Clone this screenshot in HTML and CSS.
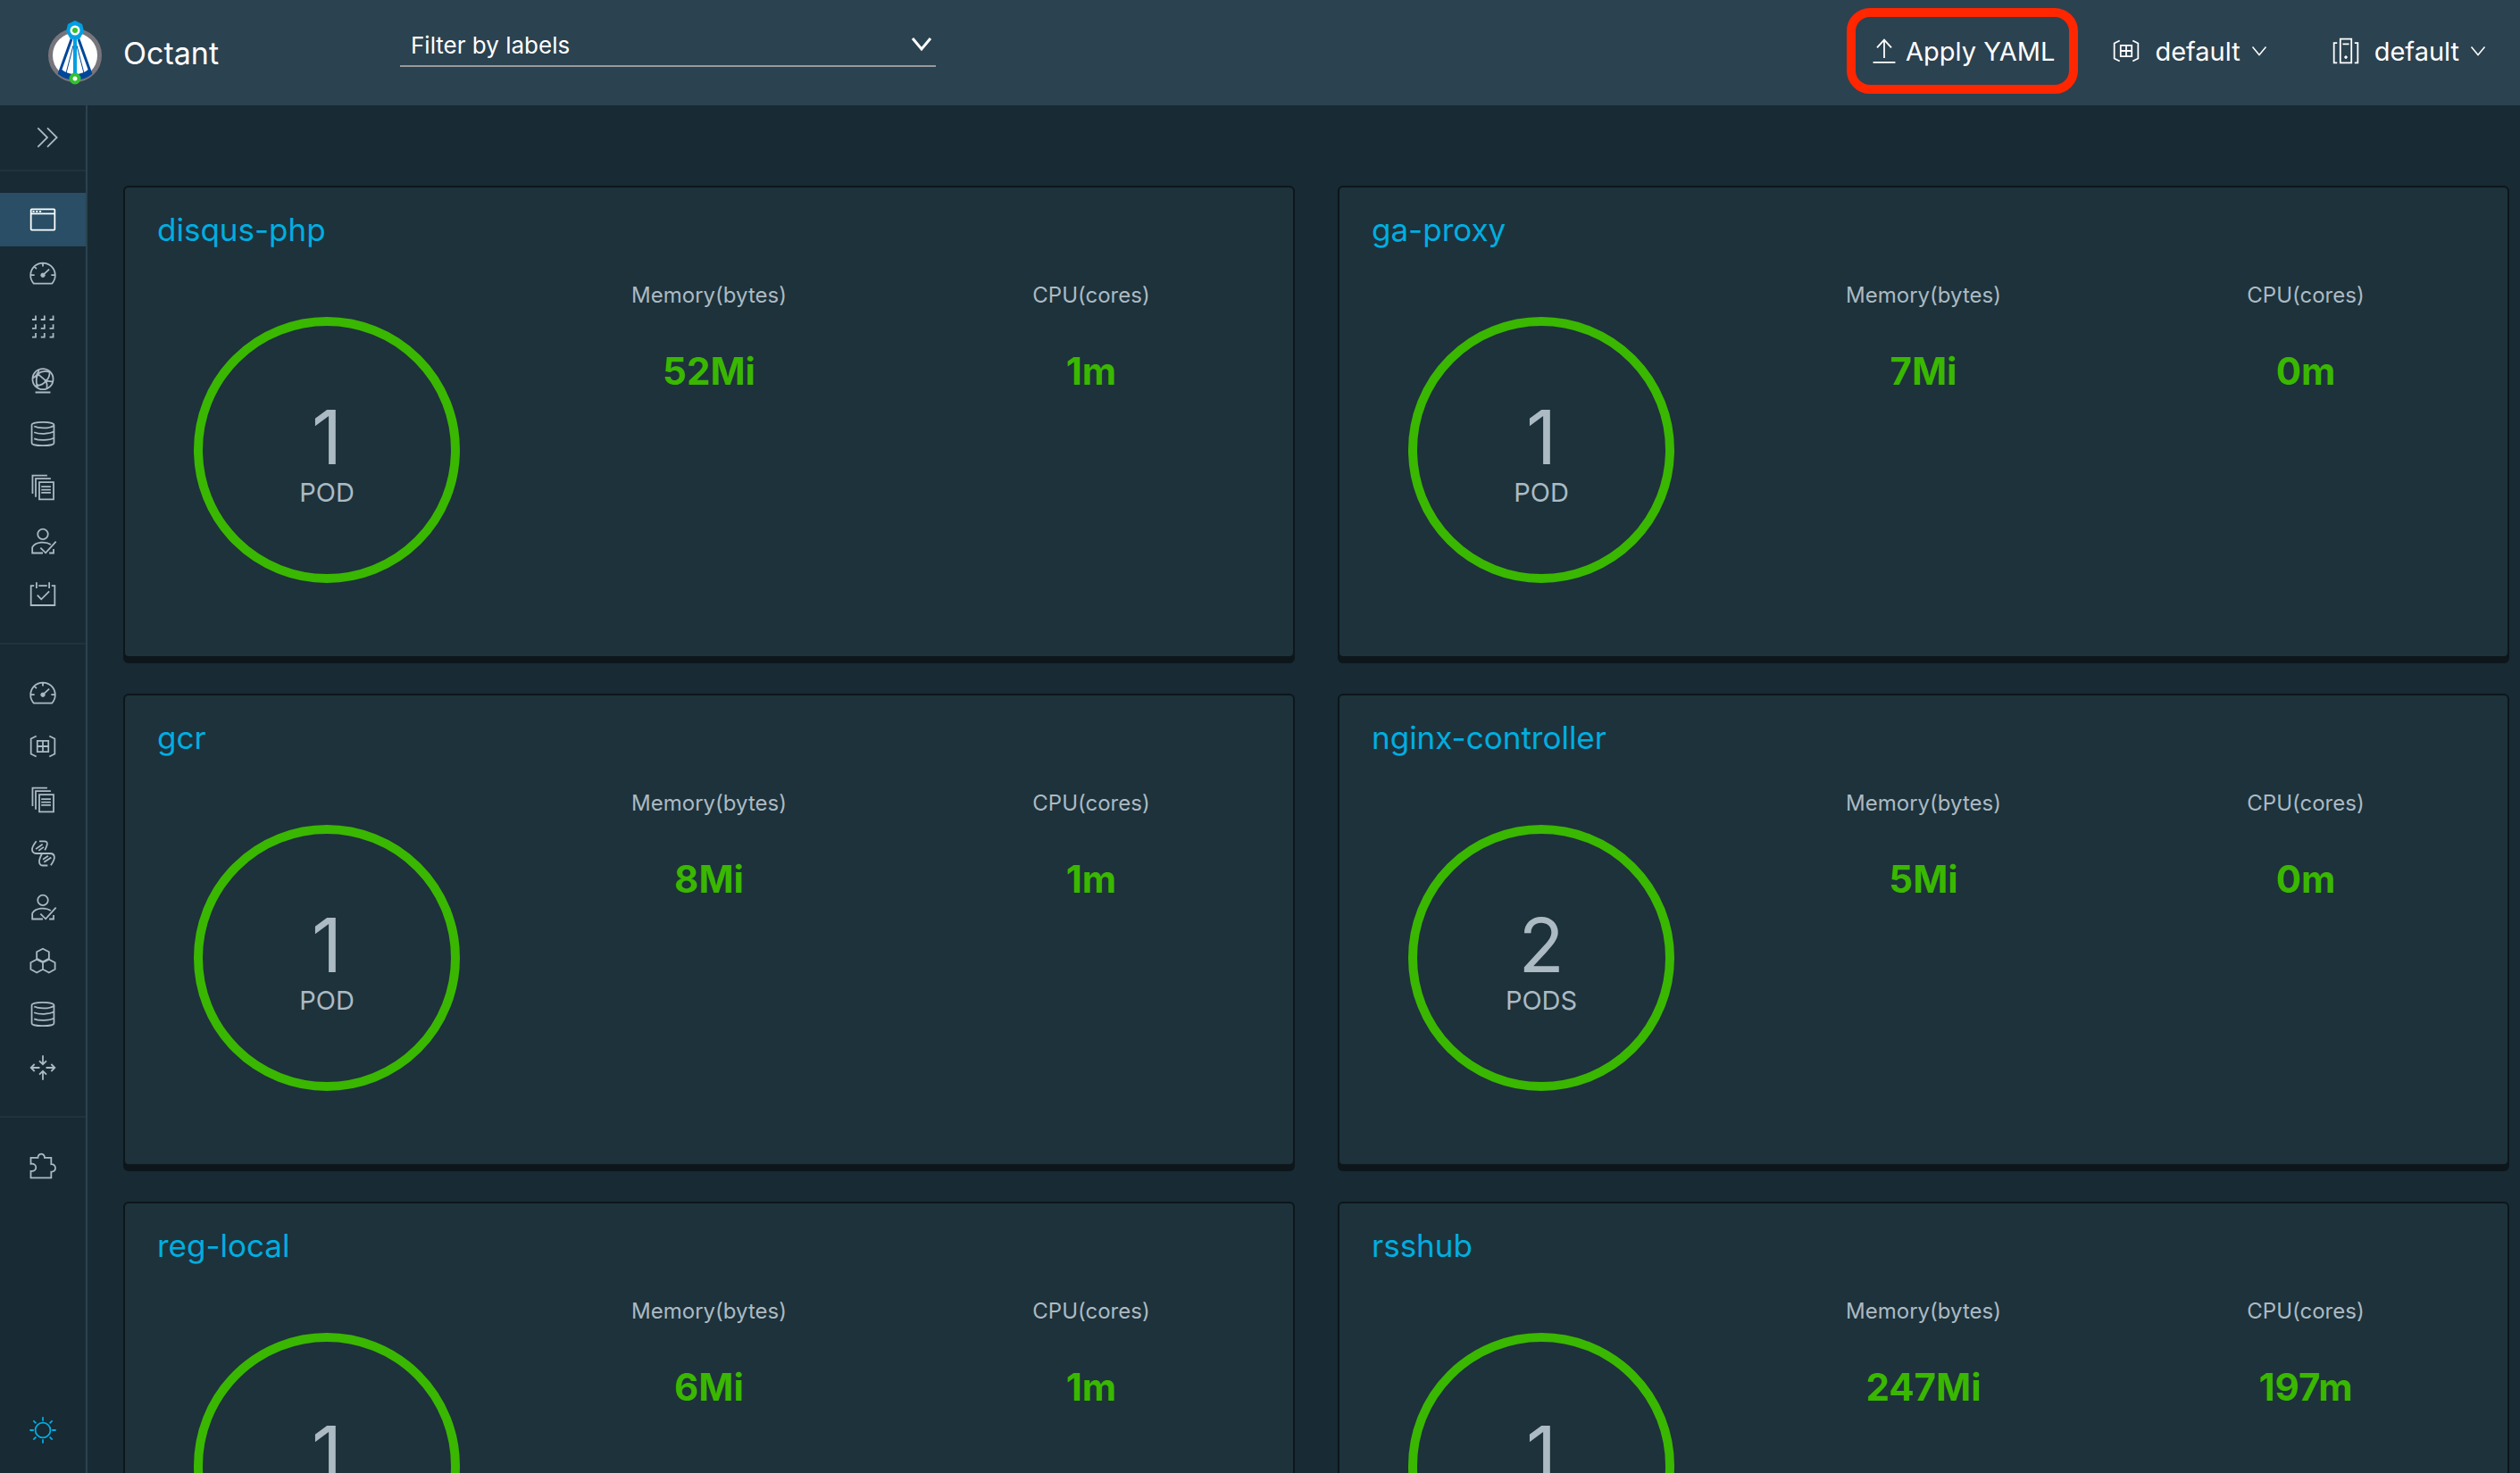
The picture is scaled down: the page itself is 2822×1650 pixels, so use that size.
FILE: index.html
```html
<!DOCTYPE html>
<html lang="en">
<head>
<meta charset="utf-8">
<title>Octant</title>
<meta name="viewport" content="width=device-width, initial-scale=1">
<link rel="stylesheet" href="styles.css">
</head>
<body>
<svg class="sprite" aria-hidden="true">
  <symbol id="i-window" viewBox="0 0 36 36"><rect x="3" y="5" width="30" height="26" rx="1"/><path d="M3 10.500h30M5 7.800h2.500M9.200 7.800h2.500M13.400 7.800h2.500"/></symbol>
  <symbol id="i-gauge" viewBox="0 0 36 36"><path d="M6.500 31A15.500 15.500 0 1 1 29.500 31ZM18 5v4.500M2.500 20.500h5M28.500 20.500h5M7 9.500l3 3M18 20.500l8-7.500"/><circle class="fill" cx="18" cy="20.500" r="2.500"/></symbol>
  <symbol id="i-grid" viewBox="0 0 36 36"><path d="M4.500 9h4.500V4M15.500 9h4.500V4M26.500 9h4.500V4M4.500 20h4.500v-5M15.500 20h4.500v-5M26.500 20h4.500v-5M4.500 31h4.500v-5M15.500 31h4.500v-5M26.500 31h4.500v-5"/></symbol>
  <symbol id="i-globe" viewBox="0 0 36 36"><circle cx="18" cy="16.500" r="13"/><path d="M8.500 33.200h19M11.600 10L22 18.700M11.600 10C16 6.500 22 6 27 8M22 18.700Q27 14 26.500 7M22 18.700l9 1M22 18.700Q18 24 11 24.700M12 10Q8 17 11 25M5.500 15Q8 14 11.600 10M22 18.700Q24 24 23 28M11.600 10L13 5"/><circle class="fill" cx="11.600" cy="10" r="1.500"/><circle class="fill" cx="22" cy="18.700" r="1.500"/><circle class="fill" cx="11" cy="24.700" r="1.500"/></symbol>
  <symbol id="i-storage" viewBox="0 0 36 36"><path d="M4 6.500C4 2 32 2 32 6.500V29.500C32 34 4 34 4 29.500ZM7 8.500C13 11.500 26 11.500 32 7.500M7 16C13 18.500 26 18.500 32 15M7 24C13 26.500 26 26.500 32 23"/></symbol>
  <symbol id="i-pages" viewBox="0 0 36 36"><path d="M13.500 11.500h18V33h-18zM16 17h12M16 21h12M16 24.700h12M9 30V7h19M5 26V3h18.500"/></symbol>
  <symbol id="i-user" viewBox="0 0 36 36"><circle cx="18" cy="9.400" r="6.500"/><path d="M28 22.500C22 18.500 9 18.500 4.700 26V33.200H18M26 33.200h5.500V28M15 26.600L21.500 33 34.500 18.700"/></symbol>
  <symbol id="i-calendar" viewBox="0 0 36 36"><path d="M7 7H3V31.500H33V7H29M12.700 7h10.600M10 2.500V10M26 2.500V10M11 18.700l5 5.300L26 14"/></symbol>
  <symbol id="i-namespace" viewBox="0 0 36 36"><path d="M9.800 5L3 8.500V27.500L9.800 31M26.200 5L33 8.500V27.500L26.200 31M11 11h14v14H11zM18 11v14M11 18h14"/></symbol>
  <symbol id="i-helix" viewBox="0 0 36 36"><path d="M9.800 2.500C7 6 4.500 10 4.500 13C4.500 16 6 17.500 9 18H27C30.500 18 32.500 20 32.500 23C32.500 26 30 30 28 33M13.500 2.700H20C25 2.700 24 7 20.500 14M17 18C14 24 13 27 13.500 29C14 32 16 33.200 18 33.200H24M9 12.500L17.600 6.500M12.700 14.500L19 10M18 25.500L24.700 21M19.500 29L28.500 23"/></symbol>
  <symbol id="i-hexes" viewBox="0 0 36 36"><path d="M18 3l7.700 4v8.500L18 19.500l-7.700-4V7zM10.300 16.500L18 20.500V29L10.300 33.200 2.700 29V20.500zM25.700 16.500L33.300 20.500V29L25.700 33.200 18 29V20.500z"/></symbol>
  <symbol id="i-arrows" viewBox="0 0 36 36"><path d="M18 2.600V13.500M13.500 9.500L18 13.800 22.500 9.500M18 33.400V22.500M13.500 26.500L18 22.200 22.500 26.500M14 18H3M7.500 13.500L3 18 7.500 22.500M22 18H33M28.500 13.500L33 18 28.500 22.500"/></symbol>
  <symbol id="i-plugin" viewBox="0 0 36 36"><path d="M2.800 7.700H11.800C11.500 1.500 20.500 1.500 20.200 7.700H28.500V16C35.500 15.500 35.500 26 28.500 25.500V33H2.800V24.500C11.500 26 11.500 14 2.800 15.500Z"/></symbol>
  <symbol id="i-sun" viewBox="0 0 36 36"><circle cx="18" cy="18" r="9.500"/><path d="M18 1.500v5M18 29.500v5M1.500 18h5M29.500 18h5M6 6l3.500 3.500M26.500 26.500L30 30M30 6l-3.500 3.500M9.500 26.500L6 30"/></symbol>
  <symbol id="i-cluster" viewBox="0 0 36 36"><path d="M11 3H25V33H11zM14 9.500h8M7 8H3V33H7M29 8h4V33H29"/><circle class="fill" cx="18" cy="26" r="1.500"/></symbol>
  <symbol id="i-upload" viewBox="0 0 36 36"><path d="M18 27V4M9 14L18 4 27 14M4 32.500H32"/></symbol>
  <symbol id="i-expand" viewBox="0 0 36 36"><path d="M6 6L18 18 6 30M18 6L30 18 18 30"/></symbol>
  <symbol id="i-caret" viewBox="0 0 24 24"><path d="M2 6L12 18 22 6"/></symbol>
</svg>

<header class="header">
  <a class="brand" href="#">
    <svg class="logo" viewBox="0 0 64 72" aria-hidden="true">
      <circle cx="32" cy="39" r="27.500" fill="#fff" stroke="#76757b" stroke-width="5"/>
      <path d="M13 60A30 30 0 0 0 51 60L48 54A24 24 0 0 1 16 54Z" fill="#00479a"/>
      <path d="M28 21L14 60M36 21L50 60" stroke="#00479a" stroke-width="3"/>
      <path d="M30 28L22 59M34 28L42 59" stroke="#00479a" stroke-width="1"/>
      <path d="M32 20V60" stroke="#009fe3" stroke-width="4"/>
      <path d="M32 0l8 4 2 8-5 9H27l-5-9 2-8z" fill="#009fe3"/>
      <circle cx="32" cy="11" r="5.500" fill="#fff"/><circle cx="32" cy="11" r="3" fill="#34c030"/>
      <circle cx="32" cy="65" r="4.500" fill="#fff" stroke="#34c030" stroke-width="4"/>
    </svg>
    <span>Octant</span>
  </a>
  <div class="filter">
    <select aria-label="Filter by labels"><option>Filter by labels</option></select>
    <svg class="filter-caret" aria-hidden="true"><use href="#i-caret"/></svg>
  </div>
  <div class="tools">
    <button class="tool apply" type="button"><svg class="icon" aria-hidden="true"><use href="#i-upload"/></svg>Apply YAML</button>
    <button class="tool" type="button"><svg class="icon" aria-hidden="true"><use href="#i-namespace"/></svg>default<svg class="caret" aria-hidden="true"><use href="#i-caret"/></svg></button>
    <button class="tool" type="button"><svg class="icon" aria-hidden="true"><use href="#i-cluster"/></svg>default<svg class="caret" aria-hidden="true"><use href="#i-caret"/></svg></button>
  </div>
</header>

<div class="shell">
  <nav class="sidebar" aria-label="Main">
    <button class="expand" type="button" aria-label="Expand"><svg class="icon" aria-hidden="true"><use href="#i-expand"/></svg></button>
    <div class="group">
      <a class="item active" href="#" aria-label="Applications"><svg class="icon"><use href="#i-window"/></svg></a>
      <a class="item" href="#" aria-label="Overview"><svg class="icon"><use href="#i-gauge"/></svg></a>
      <a class="item" href="#" aria-label="Workloads"><svg class="icon"><use href="#i-grid"/></svg></a>
      <a class="item" href="#" aria-label="Discovery"><svg class="icon"><use href="#i-globe"/></svg></a>
      <a class="item" href="#" aria-label="Storage"><svg class="icon"><use href="#i-storage"/></svg></a>
      <a class="item" href="#" aria-label="Resources"><svg class="icon"><use href="#i-pages"/></svg></a>
      <a class="item" href="#" aria-label="Access"><svg class="icon"><use href="#i-user"/></svg></a>
      <a class="item" href="#" aria-label="Events"><svg class="icon"><use href="#i-calendar"/></svg></a>
    </div>
    <div class="group">
      <a class="item" href="#" aria-label="Cluster"><svg class="icon"><use href="#i-gauge"/></svg></a>
      <a class="item" href="#" aria-label="Namespaces"><svg class="icon"><use href="#i-namespace"/></svg></a>
      <a class="item" href="#" aria-label="Custom resources"><svg class="icon"><use href="#i-pages"/></svg></a>
      <a class="item" href="#" aria-label="Services"><svg class="icon"><use href="#i-helix"/></svg></a>
      <a class="item" href="#" aria-label="Cluster access"><svg class="icon"><use href="#i-user"/></svg></a>
      <a class="item" href="#" aria-label="Nodes"><svg class="icon"><use href="#i-hexes"/></svg></a>
      <a class="item" href="#" aria-label="Volumes"><svg class="icon"><use href="#i-storage"/></svg></a>
      <a class="item" href="#" aria-label="Port forwards"><svg class="icon"><use href="#i-arrows"/></svg></a>
    </div>
    <div class="group">
      <a class="item" href="#" aria-label="Plugins"><svg class="icon"><use href="#i-plugin"/></svg></a>
    </div>
    <button class="item theme" type="button" aria-label="Switch theme"><svg class="icon"><use href="#i-sun"/></svg></button>
  </nav>

  <main class="content">
    <article class="card">
      <h2><a href="#">disqus-php</a></h2>
      <div class="stats">
        <div class="ring"><span class="count">1</span><span class="unit">POD</span></div>
        <div class="metric"><h3>Memory(bytes)</h3><p>52Mi</p></div>
        <div class="metric"><h3>CPU(cores)</h3><p>1m</p></div>
      </div>
    </article>
    <article class="card">
      <h2><a href="#">ga-proxy</a></h2>
      <div class="stats">
        <div class="ring"><span class="count">1</span><span class="unit">POD</span></div>
        <div class="metric"><h3>Memory(bytes)</h3><p>7Mi</p></div>
        <div class="metric"><h3>CPU(cores)</h3><p>0m</p></div>
      </div>
    </article>
    <article class="card">
      <h2><a href="#">gcr</a></h2>
      <div class="stats">
        <div class="ring"><span class="count">1</span><span class="unit">POD</span></div>
        <div class="metric"><h3>Memory(bytes)</h3><p>8Mi</p></div>
        <div class="metric"><h3>CPU(cores)</h3><p>1m</p></div>
      </div>
    </article>
    <article class="card">
      <h2><a href="#">nginx-controller</a></h2>
      <div class="stats">
        <div class="ring"><span class="count">2</span><span class="unit">PODS</span></div>
        <div class="metric"><h3>Memory(bytes)</h3><p>5Mi</p></div>
        <div class="metric"><h3>CPU(cores)</h3><p>0m</p></div>
      </div>
    </article>
    <article class="card">
      <h2><a href="#">reg-local</a></h2>
      <div class="stats">
        <div class="ring"><span class="count">1</span><span class="unit">POD</span></div>
        <div class="metric"><h3>Memory(bytes)</h3><p>6Mi</p></div>
        <div class="metric"><h3>CPU(cores)</h3><p>1m</p></div>
      </div>
    </article>
    <article class="card">
      <h2><a href="#">rsshub</a></h2>
      <div class="stats">
        <div class="ring"><span class="count">1</span><span class="unit">POD</span></div>
        <div class="metric"><h3>Memory(bytes)</h3><p>247Mi</p></div>
        <div class="metric"><h3>CPU(cores)</h3><p>197m</p></div>
      </div>
    </article>
  </main>
</div>
</body>
</html>
```
FILE: styles.css
```css
* { box-sizing: border-box; }

body {
  margin: 0;
  height: 100vh;
  display: flex;
  flex-direction: column;
  overflow: hidden;
  background: #182a34;
  color: #acbac3;
  font-family: Inter, "Open Sans", sans-serif;
}

h2, h3, p { margin: 0; }
a { color: inherit; text-decoration: none; }

button {
  margin: 0;
  padding: 0;
  border: 0;
  background: none;
  color: inherit;
  font: inherit;
  cursor: pointer;
}

svg {
  fill: none;
  stroke: currentColor;
  stroke-width: 2;
}

.fill { fill: currentColor; stroke-width: 1; }
.sprite { display: none; }
.icon { width: 32px; height: 32px; flex: none; }

/* Header */
.header {
  flex: none;
  display: flex;
  align-items: center;
  height: 118px;
  padding: 0 38px 0 52px;
  background: #2b4250;
  color: #fff;
}

.brand {
  display: flex;
  align-items: center;
  gap: 22px;
  width: 396px;
  font-size: 34px;
}

.logo { width: 64px; height: 72px; stroke: none; }

.filter { position: relative; width: 600px; }

.filter select {
  width: 100%;
  height: 48px;
  margin-bottom: 16px;
  padding: 0 48px 0 12px;
  display: block;
  appearance: none;
  border: 0;
  border-bottom: 2px solid #999;
  border-radius: 0;
  background: transparent;
  color: #fff;
  font: inherit;
  font-size: 26px;
}

.filter-caret {
  position: absolute;
  right: 4px;
  top: 10px;
  width: 24px;
  height: 24px;
  stroke-width: 3;
}

.tools {
  display: flex;
  align-items: center;
  margin: 0 0 4px auto;
}

.tool {
  display: flex;
  align-items: center;
  gap: 16px;
  margin-left: 72px;
  font-size: 29px;
}

.apply {
  gap: 8px;
  height: 96px;
  margin: 0 -34px 0 0;
  padding: 0 16px;
  border: 10px solid #ff2600;
  border-radius: 26px;
}

.caret { width: 18px; height: 18px; margin-left: -4px; }

/* Sidebar */
.shell { flex: 1; display: flex; min-height: 0; }

.sidebar {
  flex: none;
  display: flex;
  flex-direction: column;
  width: 98px;
  padding-bottom: 18px;
  border-right: 2px solid #2b4250;
}

.expand {
  display: flex;
  align-items: center;
  justify-content: center;
  height: 72px;
  padding-left: 10px;
}

.group { padding: 24px 0; border-top: 2px solid #21333b; }

.item {
  display: flex;
  align-items: center;
  justify-content: center;
  height: 60px;
}

.item.active { background: #294e65; color: #fff; }
.theme { margin-top: auto; color: #00aee0; }

/* Cards */
.content {
  flex: 1;
  display: grid;
  grid-template-columns: 1fr 1fr;
  align-content: start;
  gap: 40px 48px;
  padding: 90px 12px 40px 40px;
  overflow: hidden;
}

.card {
  min-height: 529px;
  padding: 0 12px;
  border: 2px solid #0d161b;
  border-radius: 6px;
  background: #1d323b;
  box-shadow: 0 6px 0 #0d161b;
}

.card h2 {
  padding: 23px 24px 20px;
  color: #00aee0;
  font-size: 35px;
  font-weight: 400;
  line-height: 48px;
}

.stats {
  display: grid;
  grid-template-columns: repeat(3, 1fr);
  justify-items: center;
}

.ring {
  display: flex;
  flex-direction: column;
  align-items: center;
  width: 298px;
  height: 298px;
  margin-top: 54px;
  padding-top: 77px;
  border: 10px solid #3ab700;
  border-radius: 50%;
}

.count { font-size: 84px; font-weight: 400; line-height: 96px; }
.unit { font-size: 29px; line-height: 28px; }

.metric { padding-top: 14px; text-align: center; }
.metric h3 { font-size: 24px; font-weight: 400; line-height: 32px; }

.metric p {
  margin-top: 39px;
  color: #3ab700;
  font-size: 42px;
  font-weight: 700;
  line-height: 60px;
}
```
